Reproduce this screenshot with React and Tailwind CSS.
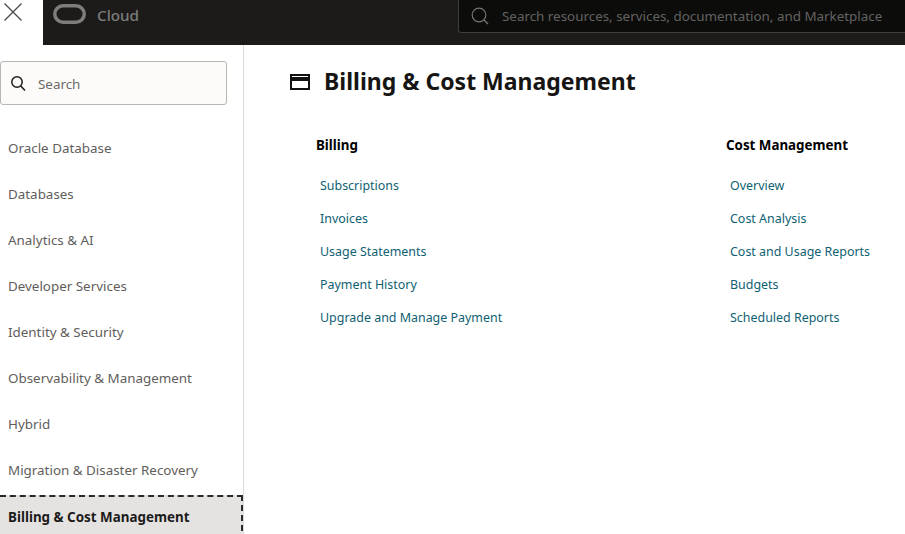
import React from "react";

const nav = [
  "Oracle Database",
  "Databases",
  "Analytics & AI",
  "Developer Services",
  "Identity & Security",
  "Observability & Management",
  "Hybrid",
  "Migration & Disaster Recovery",
];
const billing = ["Subscriptions", "Invoices", "Usage Statements", "Payment History", "Upgrade and Manage Payment"];
const cost = ["Overview", "Cost Analysis", "Cost and Usage Reports", "Budgets", "Scheduled Reports"];

function LinkColumn({ title, links, className }) {
  return (
    <div className={className}>
      <h2 className="text-[13.35px] leading-[20px] font-bold text-black">{title}</h2>
      <ul className="mt-[15px] pl-1 flex flex-col">
        {links.map((l) => (
          <li key={l} className="h-[33px] flex items-center text-[12.45px] text-[#0f5f73]">{l}</li>
        ))}
      </ul>
    </div>
  );
}

export default function App() {
  return (
    <div className="w-[905px] h-[534px] overflow-hidden bg-white flex flex-col font-['Noto_Sans','Open_Sans',sans-serif]">
      <header className="h-[45px] shrink-0 flex">
        <div className="w-[43px] shrink-0 bg-white pl-[3px] pt-[2px]">
          <svg width="20" height="20" viewBox="0 0 20 20" fill="none" stroke="#4a4a48" strokeWidth="1.3">
            <path d="M1.5 1.5 L18.5 18.5 M18.5 1.5 L1.5 18.5" />
          </svg>
        </div>
        <div className="flex-1 bg-[#1c1b1a] flex items-start">
          <div className="w-[415px] shrink-0 flex items-center pl-[10px] h-[30px]">
            <svg width="33" height="20" viewBox="0 0 33 20" fill="none" className="-mt-[2px]">
              <rect x="1.75" y="1.75" width="29.5" height="16.5" rx="8.25" stroke="#7e7d7b" strokeWidth="3.5" />
            </svg>
            <span className="ml-[11px] text-[15.2px] font-medium text-[#7e7d7b]">Cloud</span>
          </div>
          <div className="flex-1 h-[33px] bg-[#0c0c0b] border-l border-b border-[#3e3d3c] rounded-bl-[3px] flex items-center pl-[12px]">
            <svg width="18" height="18" viewBox="0 0 18 18" fill="none" stroke="#777674" strokeWidth="1.2">
              <circle cx="8" cy="8" r="6.8" />
              <path d="M13 13 L17 17" />
            </svg>
            <span className="ml-[13px] pt-[1px] text-[13.4px] text-[#636261] whitespace-nowrap">Search resources, services, documentation, and Marketplace</span>
          </div>
        </div>
      </header>
      <div className="flex-1 flex min-h-0">
        <aside className="w-[244px] shrink-0 border-r border-[#dedcda] flex flex-col">
          <div className="mt-4 h-[44px] w-[227px] border border-[#b9b5b0] rounded-[3px] bg-[#fcfbfa] flex items-center pl-[9px]">
            <svg width="16" height="17" viewBox="0 0 16 17" fill="none" stroke="#1c1b1a" strokeWidth="1.5">
              <circle cx="7" cy="7" r="5.2" />
              <path d="M10.8 11 L15 15.5" />
            </svg>
            <span className="ml-[12px] pt-[2px] text-[13.4px] text-[#6b6a68]">Search</span>
          </div>
          <nav className="mt-[21px] flex flex-col flex-1 min-h-0">
            {nav.map((n) => (
              <div key={n} className="h-[46px] shrink-0 flex items-center pl-2 pb-[1px] text-[13.4px] text-[#5f5e5c]">{n}</div>
            ))}
            <div className="h-[46px] mt-[1px] shrink-0 flex items-center pl-2 pb-[4px] text-[13.4px] font-bold text-[#1c1b1a] bg-[#e4e3e2] border-t-2 border-r-2 border-dashed border-[#2a2928]">
              Billing &amp; Cost Management
            </div>
          </nav>
        </aside>
        <main className="flex-1 min-w-0 pl-[46px] pt-[18px]">
          <div className="flex items-center h-[36px]">
            <svg width="20" height="16" viewBox="0 0 20 16" fill="none" className="mt-[1px]">
              <rect x="1" y="1" width="18" height="14" stroke="#111" strokeWidth="2" />
              <rect x="1" y="3" width="18" height="4" fill="#111" />
            </svg>
            <h1 className="ml-[14px] text-[23px] font-bold text-[#161513] whitespace-nowrap">Billing &amp; Cost Management</h1>
          </div>
          <div className="mt-[36px] pl-[26px] flex">
            <LinkColumn title="Billing" links={billing} className="w-[410px] shrink-0" />
            <LinkColumn title="Cost Management" links={cost} className="shrink-0" />
          </div>
        </main>
      </div>
    </div>
  );
}
